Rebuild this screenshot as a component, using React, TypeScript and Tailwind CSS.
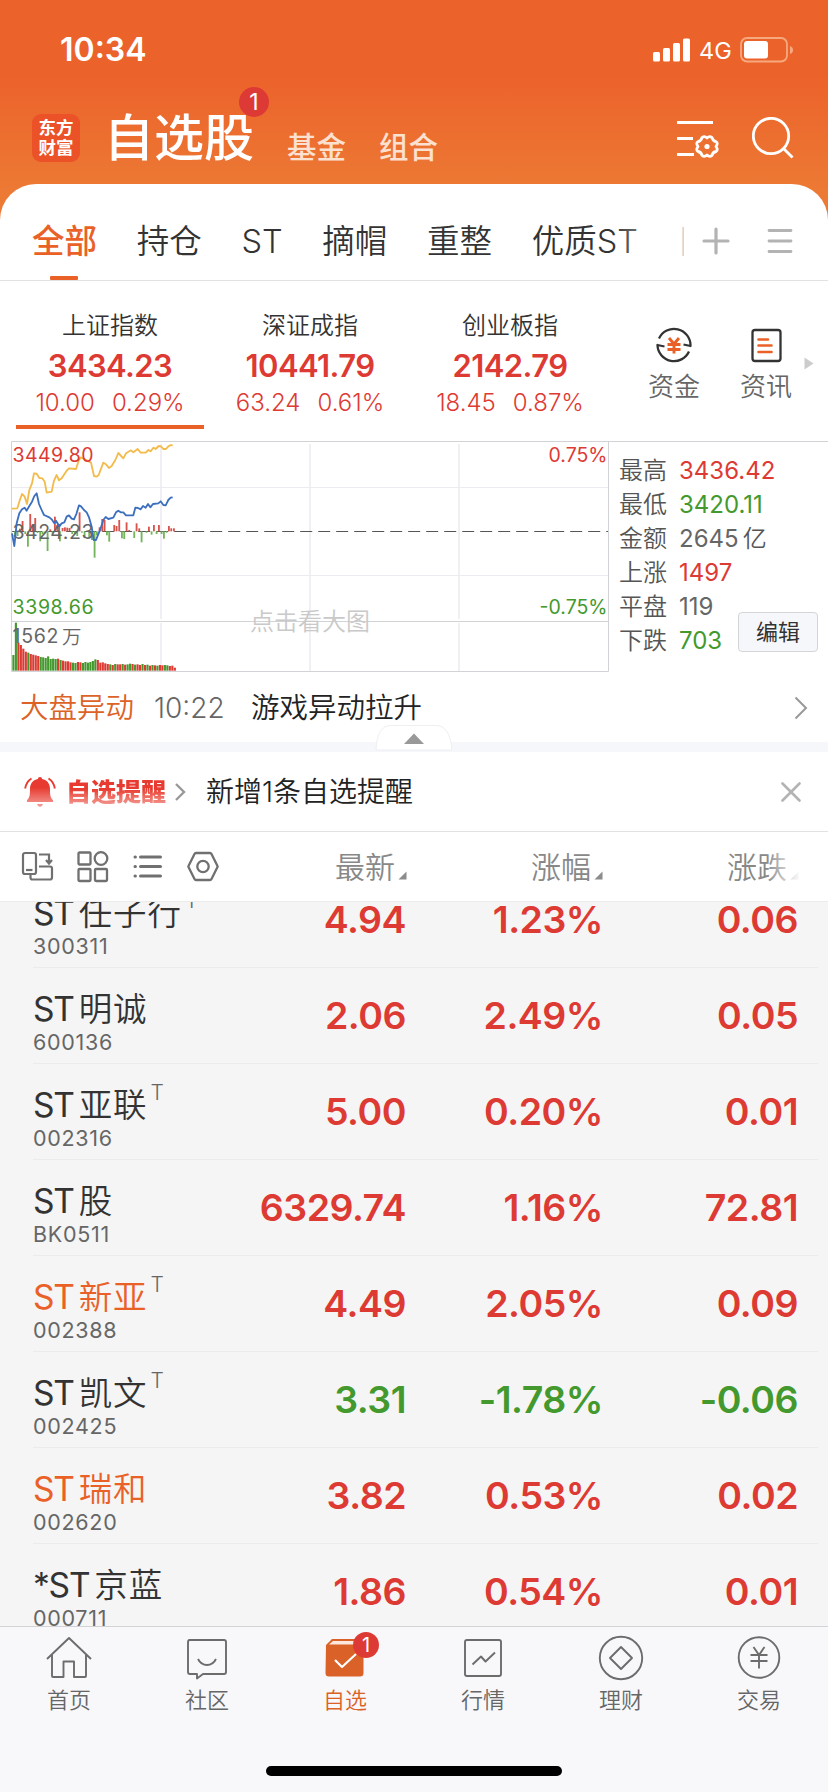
import React from "react";

const RED = "#dd3a33";
const GREEN = "#43992d";

const tabs = ["持仓", "ST", "摘帽", "重整", "优质ST", "国"];

const indices = [
  { name: "上证指数", value: "3434.23", change: "10.00", pct: "0.29%", active: true },
  { name: "深证成指", value: "10441.79", change: "63.24", pct: "0.61%", active: false },
  { name: "创业板指", value: "2142.79", change: "18.45", pct: "0.87%", active: false },
];

const stats = [
  { label: "最高", value: "3436.42", cls: "text-[#dd3a33]" },
  { label: "最低", value: "3420.11", cls: "text-[#43992d]" },
  { label: "金额", value: "2645", unit: "亿", cls: "text-[#666]" },
  { label: "上涨", value: "1497", cls: "text-[#dd3a33]" },
  { label: "平盘", value: "119", cls: "text-[#666]" },
  { label: "下跌", value: "703", cls: "text-[#43992d]" },
];

type Stock = { pre: string; name: string; code: string; t?: boolean; hot?: boolean; down?: boolean; v: [string, string, string] };

const stocks: Stock[] = [
  { pre: "ST", name: "任子行", code: "300311", t: true, v: ["4.94", "1.23%", "0.06"] },
  { pre: "ST", name: "明诚", code: "600136", v: ["2.06", "2.49%", "0.05"] },
  { pre: "ST", name: "亚联", code: "002316", t: true, v: ["5.00", "0.20%", "0.01"] },
  { pre: "ST", name: "股", code: "BK0511", v: ["6329.74", "1.16%", "72.81"] },
  { pre: "ST", name: "新亚", code: "002388", t: true, hot: true, v: ["4.49", "2.05%", "0.09"] },
  { pre: "ST", name: "凯文", code: "002425", t: true, down: true, v: ["3.31", "-1.78%", "-0.06"] },
  { pre: "ST", name: "瑞和", code: "002620", hot: true, v: ["3.82", "0.53%", "0.02"] },
  { pre: "*ST", name: "京蓝", code: "000711", v: ["1.86", "0.54%", "0.01"] },
];

const avgLine =
  "36,236 52,235 58,215 66,192 74,200 81,222 88,180 96,160 102,130 110,131 118,144 127,145 134,155 140,188 155,185 162,152 170,135 177,151 185,145 200,122 207,115 228,117 236,92 243,82 262,92 273,98 282,138 290,140 296,135 310,98 318,103 327,114 335,108 346,90 355,69 370,85 378,70 393,61 400,67 413,57 422,68 437,68 445,60 452,64 460,53 467,57 476,48 483,49 490,57 498,57 505,49 513,45 518,47";
const priceLine =
  "36,310 43,348 50,280 58,250 66,238 74,233 80,242 88,228 96,215 103,198 110,190 117,222 125,240 132,255 148,262 155,268 163,280 168,272 178,289 185,280 193,277 200,260 207,256 215,266 222,268 229,252 237,226 243,229 252,240 260,247 267,262 275,290 281,330 288,330 296,310 302,295 310,270 317,261 325,267 340,263 348,247 355,242 362,247 370,247 378,256 400,256 406,233 414,234 422,238 429,228 437,233 444,222 451,232 459,222 475,220 482,214 490,225 497,226 505,210 512,203 518,202";

const momentum: [number, number][] = [
  [45, 320], [53, 318], [60, 296], [68, 273], [76, 312], [84, 350], [91, 252], [98, 284], [106, 264], [113, 309], [121, 334],
  [128, 312], [136, 309], [143, 363], [151, 298], [158, 310], [165, 260], [172, 285], [180, 334], [188, 294], [195, 292],
  [202, 293], [209, 294], [217, 312], [225, 312], [232, 318], [239, 247], [246, 308], [254, 324], [268, 324], [276, 330],
  [284, 383], [291, 316], [299, 292], [307, 267], [314, 270], [321, 316], [328, 335], [343, 285], [350, 288], [358, 270],
  [366, 325], [373, 327], [380, 277], [388, 300], [403, 324], [410, 280], [418, 295], [425, 337], [440, 308], [447, 290],
  [455, 314], [462, 285], [470, 312], [477, 285], [485, 312], [492, 326], [500, 308], [507, 288], [514, 295], [522, 295],
];

const volume =
  "g47 g144 r84 r77 r66 r57 g54 r50 r48 r46 r44 g41 g40 g38 g43 g35 g36 g35 r36 g32 r30 r28 r28 r25 g24 g23 r26 r25 g23 g26 g24 g26 g29 g34 r32 r24 r25 r22 r20 g19 r17 g20 r19 r19 g20 r18 g19 g21 r20 g18 r19 r17 g20 r17 g18 r15 g17 r16 g15 r17 r16 g17 g16 r14 r15 r9".split(" ");

function Chart() {
  return (
    <svg width="610" height="234" viewBox="0 0 610 234" className="block shrink-0 font-[Inter,'Noto_Sans_CJK_SC',sans-serif]">
      <g fill="none" stroke="#efeff4" strokeWidth="2">
        <path d="M161 4V179M310 4V179M459 4V179M161 183V231M310 183V231M459 183V231" />
        <path d="M12 47.5H608M12 135.5H608" stroke="#ececf0" strokeWidth="1" />
      </g>
      <path d="M608.5 1.5V231.5H11.5V1.5H828M11.5 181.5H608" fill="none" stroke="#d2d3d6" strokeWidth="1" />
      <path d="M12 91.5H608" stroke="#555" strokeWidth="1" strokeDasharray="12 6" strokeDashoffset="-0.2" />
      <g transform="translate(0 -10) scale(0.33333)">
        {volume.map((v, i) => {
          const h = Number(v.slice(1));
          return <rect key={i} x={37 + i * 7.45} y={722 - h} width="6.4" height={h} fill={v[0] === "g" ? GREEN : RED} />;
        })}
      </g>
      <g transform="translate(0 -10) scale(0.33333)" fill="none">
        {momentum.map(([x, y]) => (
          <rect key={x} x={x - 3} y={Math.min(304, y)} width="5.5" height={Math.abs(304 - y)} fill={y < 304 ? "#d9534d" : "#74b55c"} />
        ))}
        <polyline points={avgLine} stroke="#f3bb4b" strokeWidth="5.5" strokeLinejoin="round" />
      </g>
      <g fontSize="19.5" fill="#666">
        <text x="12.5" y="98.5" textLength="81">3424.23</text>
        <text x="12.5" y="203" textLength="46">1562</text>
        <text x="62" y="203.5" fontSize="19.5" fontWeight="350">万</text>
        <text x="12.5" y="22" fill={RED} textLength="81">3449.80</text>
        <text x="12.5" y="174" fill={GREEN} textLength="81">3398.66</text>
        <text x="607.5" y="22" fill={RED} textAnchor="end">0.75%</text>
        <text x="607.5" y="174" fill={GREEN} textAnchor="end">-0.75%</text>
        <text x="250" y="190" fontSize="24" fontWeight="350" fill="#c9c9c9">点击看大图</text>
      </g>
      <g transform="translate(0 -10) scale(0.33333)" fill="none">
        <polyline points={priceLine} stroke="#3c6fbe" strokeWidth="5.5" strokeLinejoin="round" />
      </g>
    </svg>
  );
}

function Header() {
  return (
    <header className="h-[184px] text-white">
      <div className="flex h-[100px] items-center pl-[60px] pr-[34px]">
        <span className="text-[32px] font-semibold leading-none">10:34</span>
        <svg className="ml-auto" width="38" height="24" viewBox="0 0 38 24" fill="#fff">
          <rect x="0" y="14" width="7" height="9.5" rx="1.5" />
          <rect x="10" y="10" width="7" height="13.5" rx="1.5" />
          <rect x="20" y="5" width="7" height="18.5" rx="1.5" />
          <rect x="30" y="0.5" width="7" height="23" rx="1.5" />
        </svg>
        <span className="ml-[8px] w-[33px] pt-[2px] text-[23.5px] leading-none">4G</span>
        <svg className="ml-[8px]" width="54" height="26" viewBox="0 0 54 26">
          <rect x="1" y="1" width="46" height="23.5" rx="6" fill="none" stroke="#f6a87f" strokeWidth="1.8" />
          <rect x="4" y="4" width="24" height="17.5" rx="3" fill="#fff" />
          <path d="M50 9v8q3-1 3-4t-3-4z" fill="#f6a87f" />
        </svg>
      </div>
      <div className="flex h-[76px] items-center pl-[32px] pr-[34px]">
        <div className="grid h-[48px] w-[48px] place-items-center rounded-[9px] bg-[#eb5228]">
          <div className="text-center text-[17.5px] font-bold leading-[20px]">
            <div>东方</div>
            <div>财富</div>
          </div>
        </div>
        <div className="relative ml-[24px] text-[50px] font-medium leading-none">
          自选股
          <span className="absolute right-[-15px] top-[-26px] grid h-[30px] w-[30px] place-items-center rounded-full bg-[#dd3a35] text-[23px] font-normal leading-none">1</span>
        </div>
        <div className="ml-[33px] flex gap-[33px] pt-[19px] text-[29.5px] font-medium leading-none text-[#fce0d0]">
          <span>基金</span>
          <span>组合</span>
        </div>
        <svg className="ml-auto" width="44" height="42" viewBox="0 0 44 42" fill="none" stroke="#fff" strokeWidth="2.8">
          <path d="M1 5.500H37M1 21.500H17M1 37.500H18" />
          <path
            strokeLinejoin="round"
            d="M31 20.900Q33.500 18.500 36 20.600Q36.800 23.900 40 24.600Q42.500 26 40 29.500Q42.500 33 40 34.500Q36.800 35.100 36 38.400Q33.500 40.500 31 38.100Q28.500 40.500 26 38.400Q25.200 35.100 22 34.500Q19.500 33 22 29.500Q19.500 26 22 24.600Q25.200 23.900 26 20.600Q28.500 18.500 31 20.900Z"
          />
          <circle cx="31" cy="29.5" r="2.6" fill="#fff" stroke="none" />
        </svg>
        <svg className="ml-[32px]" width="42" height="42" viewBox="0 0 42 42" fill="none" stroke="#fff" strokeWidth="2.8">
          <circle cx="19" cy="19" r="17.7" />
          <path d="M31.500 31.500L40.500 40.500" />
        </svg>
      </div>
    </header>
  );
}

function Tabs() {
  return (
    <nav className="flex h-[97px] items-center border-b border-[#e2e2e2] text-[32.5px] leading-none text-[#333]">
      <div className="relative flex h-full w-[684px] items-center gap-[39.7px] overflow-hidden pl-[32px]">
        <div className="relative flex h-full shrink-0 items-center pt-[21px] font-medium text-[#ea6128]">
          全部
          <span className="absolute bottom-0 left-[18px] h-[4px] w-[28px] rounded-[1px] bg-[#ea6128]" />
        </div>
        {tabs.map((t) => (
          <span key={t} className="shrink-0 whitespace-nowrap pt-[21px] font-[350] last-of-type:ml-[2px]">{t}</span>
        ))}
        <div className="absolute bottom-0 right-0 top-0 w-[72px] bg-linear-to-r from-white/0 to-white/80" />
      </div>
      <svg className="ml-[18px] mt-[17px]" width="28" height="28" viewBox="0 0 28 28" stroke="#b3b3b3" strokeWidth="3.2" strokeLinecap="round">
        <path d="M14 2v24M2 14h24" />
      </svg>
      <svg className="ml-[37px] mt-[17px]" width="26" height="28" viewBox="0 0 26 28" stroke="#b3b3b3" strokeWidth="2.8" strokeLinecap="round">
        <path d="M2 3.500h22M2 14h22M2 24.500h22" />
      </svg>
    </nav>
  );
}

function Indices() {
  return (
    <section className="flex h-[159px] pl-[10px]">
      {indices.map((x) => (
        <div key={x.name} className="relative flex w-[200px] flex-col items-center pt-[32px] leading-none">
          <span className="text-[24px] font-[350] leading-[26px] text-[#333]">{x.name}</span>
          <span className="mt-[10px] text-[31px] font-semibold leading-[34px] tracking-[-0.6px] text-[#dd3a33]">{x.value}</span>
          <span className="mt-[7px] flex gap-[17px] text-[24px] font-[350] leading-[26px] text-[#dd3a33]">
            <span>{x.change}</span>
            <span>{x.pct}</span>
          </span>
          {x.active && <span className="absolute left-[6px] top-[144px] h-[4px] w-[188px] bg-[#ea6128]" />}
        </div>
      ))}
      <div className="flex w-[128px] flex-col items-center pt-[44px]">
        <svg width="40" height="40" viewBox="0 0 40 40" fill="none" stroke="#333" strokeWidth="2.3" strokeLinejoin="round">
          <path d="M5 13.500A16.500 16.500 0 0 1 36.500 21L29.500 19.500" />
          <path d="M35 26.500A16.500 16.500 0 0 1 3.500 20L10.500 21.500" />
          <path d="M15 13l5 6l5-6M20 18.500v10M13.500 19.500h13M13.500 24.500h13" stroke="#ea6128" strokeWidth="2.9" />
        </svg>
        <span className="mt-[8px] text-[26px] font-[350] leading-[28px] text-[#666]">资金</span>
      </div>
      <div className="flex w-[56px] flex-col items-center pt-[44px]">
        <svg width="40" height="40" viewBox="0 0 40 40" fill="none" stroke="#333" strokeWidth="2.3">
          <rect x="6.5" y="5" width="28" height="31" rx="2.5" />
          <path d="M12.500 14.500h9.500M12.500 20.500h13M12.500 27h13" stroke="#ea6128" strokeWidth="2.6" strokeLinecap="round" />
        </svg>
        <span className="mt-[8px] text-[26px] font-[350] leading-[28px] text-[#666]">资讯</span>
      </div>
      <svg className="ml-[10px] mt-[76px]" width="10" height="13" viewBox="0 0 10 13" fill="#ccc">
        <path d="M0.500 0.500L9.500 6.500L0.500 12.500Z" />
      </svg>
    </section>
  );
}

function ChartPanel() {
  return (
    <section className="relative flex h-[234px]">
      <Chart />
      <div className="mt-[1px] flex flex-1 flex-col border-t border-[#d2d3d6] pl-[9px] pt-[12px]">
        {stats.map((s) => (
          <div key={s.label} className="flex h-[34px] items-center leading-none">
            <span className="w-[60px] text-[24px] font-[350] text-[#555]">{s.label}</span>
            <span className={"text-[24px] " + s.cls}>{s.value}</span>
            {s.unit && <span className="ml-[4px] text-[24px] font-[350] text-[#555]">{s.unit}</span>}
          </div>
        ))}
      </div>
      <button className="absolute left-[738px] top-[172px] grid h-[40px] w-[80px] place-items-center rounded-[4px] border border-[#d4d5d8] bg-[#f6f7fa] text-[22px] leading-none text-[#333]">编辑</button>
    </section>
  );
}

function News() {
  return (
    <>
      <section className="relative flex h-[68px] items-center pl-[20px] pr-[20px] leading-none">
        <span className="text-[28.5px] font-[350] text-[#dc6226]">大盘异动</span>
        <span className="ml-[20px] w-[76px] text-[28px] font-[350] text-[#666]">10:22</span>
        <span className="ml-[21px] text-[28.5px] font-[350] text-[#222]">游戏异动拉升</span>
        <svg className="ml-auto" width="14" height="24" viewBox="0 0 14 24" fill="none" stroke="#999" strokeWidth="2">
          <path d="M1.500 1.500L12 12L1.500 22.500" />
        </svg>
        <svg className="absolute left-[375px] top-[50px]" width="78" height="28" viewBox="0 0 78 28">
          <path d="M1 26Q2 1.500 16 1.500H61Q75 1.500 77 26Z" fill="#fff" stroke="#eeeff2" />
          <path d="M29 20L39 9.500L49 20Z" fill="#999" />
        </svg>
      </section>
      <div className="h-[10px] bg-[#f6f7fa]" />
    </>
  );
}

function Reminder() {
  return (
    <section className="flex h-[80px] items-center border-b border-[#e2e2e2] pl-[24px] pr-[27px] pt-[1px] leading-none">
      <svg width="32" height="32" viewBox="0 0 32 32">
        <defs>
          <linearGradient id="bell" x1="0" y1="0" x2="0" y2="1">
            <stop offset="0.35" stopColor="#e83a30" />
            <stop offset="1" stopColor="#f4a29d" />
          </linearGradient>
        </defs>
        <path
          fill="url(#bell)"
          d="M16 1C17.300 1 18 1.800 18 3C23.500 4 26 8 26 13C26 19.500 26.500 22 29 24V26H3V24C5.500 22 6 19.500 6 13C6 8 8.500 4 14 3C14 1.800 14.700 1 16 1ZM13 28H19Q18 31 16 31T13 28Z"
        />
        <path d="M7.500 2.500Q2 6 1.200 12.500M24.500 2.500Q30 6 30.800 12.500" fill="none" stroke="#e83a30" strokeWidth="2" />
      </svg>
      <span className="ml-[10px] bg-linear-to-b from-[#e83a30] from-40% to-[#f29a95] bg-clip-text text-[25px] font-black leading-[28px] text-transparent">自选提醒</span>
      <svg className="ml-[9px]" width="11" height="20" viewBox="0 0 11 20" fill="none" stroke="#999" strokeWidth="2.4">
        <path d="M1 2L9 10L1 18" />
      </svg>
      <span className="ml-[20px] text-[28px] font-[350] text-[#222]">新增1条自选提醒</span>
      <svg className="ml-auto" width="20" height="20" viewBox="0 0 20 20" stroke="#b3b3b3" strokeWidth="2.6" strokeLinecap="round">
        <path d="M1.500 1.500L18.500 18.500M18.500 1.500L1.500 18.500" />
      </svg>
    </section>
  );
}

function Corner() {
  return (
    <svg className="mb-[-17px] ml-[3px]" width="9" height="9" viewBox="0 0 9 9" fill="#8c8c8c">
      <path d="M8.500 0.500V8.500H0.500Z" />
    </svg>
  );
}

function ColumnHead() {
  return (
    <section className="relative flex h-[70px] items-center border-b border-[#ececec] pl-[20px] pt-[1px] text-[30px] font-[350] leading-none text-[#888]">
      <div className="flex items-center gap-[23px]">
        <svg width="34" height="32" viewBox="0 0 34 32" fill="none" stroke="#707070" strokeWidth="2.2">
          <rect x="3" y="2" width="13" height="21" rx="2" />
          <path d="M6 19h6.500" />
          <path d="M19 3.500H29V11.500M26 9l3 3.500l3-3.500" />
          <path d="M19 15.500H30Q32 15.500 32 17.500V26.500Q32 28.500 30 28.500H12.500Q10.500 28.500 10.500 26.500V23.500" />
        </svg>
        <svg width="32" height="32" viewBox="0 0 32 32" fill="none" stroke="#707070" strokeWidth="2.3">
          <rect x="1.500" y="1.500" width="12" height="12" rx="1" />
          <circle cx="24" cy="7.500" r="6.300" />
          <rect x="1.500" y="18" width="12" height="12" rx="1" />
          <rect x="18" y="18" width="12" height="12" rx="1" />
        </svg>
        <svg width="32" height="32" viewBox="0 0 32 32" fill="none" stroke="#707070" strokeWidth="3" strokeLinecap="round">
          <path d="M8.500 6h20M8.500 15.500h20M8.500 25h20M3 6h.4M3 15.500h.4M3 25h.4" />
        </svg>
        <svg width="32" height="32" viewBox="0 0 32 32" fill="none" stroke="#707070" strokeWidth="2.3" strokeLinejoin="round">
          <path d="M9 2H23Q24 2 24.500 3L30.500 15Q30.800 15.500 30.500 16L24.500 28Q24 29 23 29H9Q8 29 7.500 28L1.500 16Q1.200 15.500 1.500 15L7.500 3Q8 2 9 2Z" />
          <circle cx="16" cy="15.500" r="5.700" />
        </svg>
      </div>
      <div className="ml-auto flex w-[610px] pr-[30px]">
        <span className="flex w-[188px] items-center justify-end">最新<Corner /></span>
        <span className="flex w-[196px] items-center justify-end">涨幅<Corner /></span>
        <span className="flex w-[196px] items-center justify-end">涨跌<Corner /></span>
      </div>
      <div className="absolute bottom-0 right-0 top-0 w-[62px] bg-linear-to-r from-white/0 via-white/90 via-50% to-white" />
    </section>
  );
}

function Row({ s }: { s: Stock }) {
  const color = s.down ? "text-[#43992d]" : "text-[#dd3a33]";
  return (
    <div className="ml-[33px] mr-[10px] flex h-[96px] shrink-0 items-start border-b border-[#ebebeb]">
      <div className="flex w-[175px] flex-col pt-[23px] leading-none">
        <div className={"flex h-[38px] items-center whitespace-nowrap text-[33.5px] " + (s.hot ? "text-[#ea6128]" : "text-[#333]")}>
          <span className="tracking-[-1.2px]">{s.pre}</span>
          <span className="ml-[5px] font-[350] tracking-[0.9px]">{s.name}</span>
          {s.t && <span className="mb-[27px] ml-[3px] text-[21px] font-[350] text-[#666]">T</span>}
        </div>
        <span className="mt-[1px] text-[21.5px] leading-[24px] tracking-[0.7px] text-[#666]">{s.code}</span>
      </div>
      <div className={"flex pt-[28px] text-[37.5px] font-[570] leading-[40px] tracking-[-0.5px] " + color}>
        <span className="w-[198px] text-right">{s.v[0]}</span>
        <span className="w-[197px] text-right">{s.v[1]}</span>
        <span className="w-[195px] text-right">{s.v[2]}</span>
      </div>
    </div>
  );
}

const navIcons: Record<string, React.ReactNode> = {
  首页: (
    <g>
      <path d="M1 24L23 3L45 24" />
      <path d="M6 20V41Q6 42 7 42H17.500V26.500H28V42H39Q40 42 40 41V20" />
    </g>
  ),
  社区: (
    <g>
      <path d="M5 5H40Q42 5 42 7V37Q42 39 40 39H19L13 43.500V39H6Q4 39 4 37V7Q4 5 6 5Z" />
      <path d="M14 24Q17 30 23 30T32 24" />
    </g>
  ),
  自选: (
    <g stroke="none">
      <path d="M4 10L10 4H38Q41 4 41.500 8V38Q41.500 41.500 38 41.500H7Q3.500 41.500 3.500 38Z" fill="#da6127" />
      <path d="M7 9.500L11 6H38V9.500Z" fill="#fbe7dc" />
      <path d="M13 25L20 32L34 19" fill="none" stroke="#fff" strokeWidth="2.200" />
    </g>
  ),
  行情: (
    <g>
      <rect x="5" y="5" width="36" height="36" rx="2" />
      <path d="M12.500 29.500L21 21.500L25.500 26.500L35 17.500" />
    </g>
  ),
  理财: (
    <g>
      <circle cx="23" cy="23" r="21.200" />
      <path d="M23 12L34 23L23 34L12 23Z" />
    </g>
  ),
  交易: (
    <g>
      <circle cx="23" cy="22.500" r="20.300" />
      <path d="M17.500 12L23 20L28.500 12M23 20V33.500M14.500 20H31.500M14.500 26H31.500" />
    </g>
  ),
};

function BottomNav() {
  return (
    <footer className="flex h-[166px] flex-col items-center border-t border-[#d3d3d5] bg-[#f8f8fb]">
      <div className="flex w-full">
        {Object.keys(navIcons).map((k) => (
          <div key={k} className={"relative flex w-[138px] flex-col items-center pt-[8px] " + (k === "自选" ? "text-[#da6127]" : "text-[#666]")}>
            <svg width="46" height="46" viewBox="0 0 46 46" fill="none" stroke="#6c6c6c" strokeWidth="1.9" strokeLinejoin="round">
              {navIcons[k]}
            </svg>
            <span className="mt-[7px] text-[22px] font-[350] leading-[24px]">{k}</span>
            {k === "自选" && (
              <span className="absolute left-[77px] top-[5px] grid h-[26px] w-[26px] place-items-center rounded-full bg-[#dd3a35] text-[20px] leading-none text-white">1</span>
            )}
          </div>
        ))}
      </div>
      <div className="mb-[16px] mt-auto h-[10px] w-[296px] rounded-full bg-black" />
    </footer>
  );
}

export default function App() {
  return (
    <div className="flex h-[1792px] w-[828px] flex-col overflow-hidden bg-linear-to-b from-[#ec622b] from-[75px] to-[#ec7934] to-[190px] font-[Inter,'Noto_Sans_CJK_SC',sans-serif]">
      <Header />
      <main className="flex min-h-0 flex-1 flex-col rounded-t-[36px] bg-white">
        <Tabs />
        <Indices />
        <ChartPanel />
        <News />
        <Reminder />
        <ColumnHead />
        <div className="flex min-h-0 flex-1 flex-col overflow-hidden bg-[#f5f5f5]">
          <div className="mt-[-30px] flex flex-col">
            {stocks.map((s) => (
              <Row key={s.code} s={s} />
            ))}
          </div>
        </div>
      </main>
      <BottomNav />
    </div>
  );
}
